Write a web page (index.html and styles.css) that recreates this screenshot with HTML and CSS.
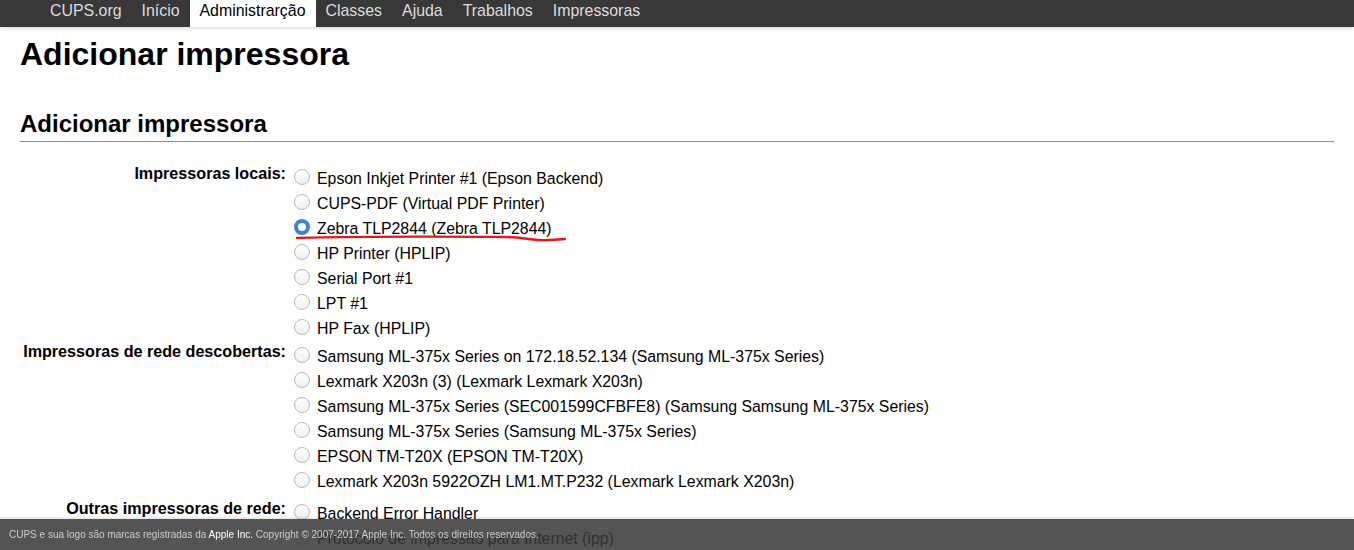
FILE: index.html
```html
<!DOCTYPE html>
<html lang="pt">
<head>
<meta charset="utf-8">
<title>Adicionar impressora - CUPS</title>
<link rel="stylesheet" href="styles.css">
</head>
<body>
<nav class="header">
  <ul class="nav">
    <li><a href="#">CUPS.org</a></li>
    <li><a href="#">Início</a></li>
    <li class="active"><a href="#">Administrarção</a></li>
    <li><a href="#">Classes</a></li>
    <li><a href="#">Ajuda</a></li>
    <li><a href="#">Trabalhos</a></li>
    <li><a href="#">Impressoras</a></li>
  </ul>
</nav>
<main class="body">
  <h1 class="title">Adicionar impressora</h1>
  <h2 class="title2">Adicionar impressora</h2>
  <form class="form">
    <div class="group">
      <div class="label">Impressoras locais:</div>
      <div class="opts">
        <label class="opt"><input type="radio" name="dev"><span>Epson Inkjet Printer #1 (Epson Backend)</span></label>
        <label class="opt"><input type="radio" name="dev"><span>CUPS-PDF (Virtual PDF Printer)</span></label>
        <label class="opt marked"><input type="radio" name="dev" checked><span>Zebra TLP2844 (Zebra TLP2844)</span>
          <svg class="scribble" width="280" height="12" viewBox="0 0 280 12"><path d="M3 5 C 60 3.5, 150 3.5, 212 4 C 230 4.2, 236 7.5, 250 7.2 C 258 7, 265 6.5, 271 6" fill="none" stroke="#e3191b" stroke-width="2.4" stroke-linecap="round"/></svg>
        </label>
        <label class="opt"><input type="radio" name="dev"><span>HP Printer (HPLIP)</span></label>
        <label class="opt"><input type="radio" name="dev"><span>Serial Port #1</span></label>
        <label class="opt"><input type="radio" name="dev"><span>LPT #1</span></label>
        <label class="opt"><input type="radio" name="dev"><span>HP Fax (HPLIP)</span></label>
      </div>
    </div>
    <div class="group">
      <div class="label">Impressoras de rede descobertas:</div>
      <div class="opts">
        <label class="opt"><input type="radio" name="dev"><span>Samsung ML-375x Series on 172.18.52.134 (Samsung ML-375x Series)</span></label>
        <label class="opt"><input type="radio" name="dev"><span>Lexmark X203n (3) (Lexmark Lexmark X203n)</span></label>
        <label class="opt"><input type="radio" name="dev"><span>Samsung ML-375x Series (SEC001599CFBFE8) (Samsung Samsung ML-375x Series)</span></label>
        <label class="opt"><input type="radio" name="dev"><span>Samsung ML-375x Series (Samsung ML-375x Series)</span></label>
        <label class="opt"><input type="radio" name="dev"><span>EPSON TM-T20X (EPSON TM-T20X)</span></label>
        <label class="opt"><input type="radio" name="dev"><span>Lexmark X203n 5922OZH LM1.MT.P232 (Lexmark Lexmark X203n)</span></label>
      </div>
    </div>
    <div class="group group-other">
      <div class="label">Outras impressoras de rede:</div>
      <div class="opts">
        <label class="opt"><input type="radio" name="dev"><span>Backend Error Handler</span></label>
        <label class="opt"><input type="radio" name="dev"><span>Protocolo de impressão para Internet (ipp)</span></label>
        <label class="opt"><input type="radio" name="dev"><span>Protocolo de impressão para Internet (https)</span></label>
      </div>
    </div>
  </form>
</main>
<footer class="footer">CUPS e sua logo são marcas registradas da <a href="#">Apple Inc.</a> Copyright © 2007-2017 Apple Inc. Todos os direitos reservados.</footer>
</body>
</html>
```
FILE: styles.css
```css
html, body {
  margin: 0;
  padding: 0;
  background: #fff;
}
body {
  font-family: "Liberation Sans", Arial, sans-serif;
  font-size: 16px;
  color: #000;
}
.header {
  background: #383838;
  height: 27px;
  box-shadow: 0 2px 3px rgba(0, 0, 0, 0.12);
}
.nav {
  list-style: none;
  margin: 0;
  padding: 0 0 0 40px;
  display: flex;
  height: 27px;
  font-size: 15.9px;
}
.nav li a {
  display: block;
  padding: 0 10px;
  height: 27px;
  line-height: 22px;
  color: #ddd;
  text-decoration: none;
}
.nav li.active a {
  background: #fff;
  color: #000;
}
.body {
  padding: 0 20px 60px;
}
.title {
  font-size: 32px;
  font-weight: bold;
  margin: 0;
  padding-top: 9px;
  line-height: 37px;
}
.title2 {
  font-size: 24px;
  font-weight: bold;
  margin: 0;
  padding-top: 37px;
  line-height: 28px;
  padding-bottom: 3px;
  border-bottom: 1px solid #8f8f8f;
}
.form {
  padding-top: 23px;
}
.group {
  display: flex;
  padding: 1px 0 2px;
}
.group-other {
  padding-top: 5px;
}
.label {
  width: 266px;
  flex: none;
  text-align: right;
  font-weight: bold;
  font-size: 16.15px;
  line-height: 25px;
  margin-top: -5px;
}
.opts {
  display: flex;
  flex-direction: column;
  padding-left: 8px;
  font-size: 15.85px;
}
.opt {
  position: relative;
  display: flex;
  align-items: center;
  height: 25px;
  white-space: nowrap;
}
.opt input {
  appearance: none;
  -webkit-appearance: none;
  width: 16px;
  height: 16px;
  margin: 0 7px 0 0;
  border: 1px solid #b9b9b9;
  border-radius: 50%;
  background: linear-gradient(#fff, #f0f0f0);
  box-sizing: border-box;
  position: relative;
  top: -2px;
}
.opt input:checked {
  border: 4px solid #3d83d6;
  background: #fff;
}
.scribble {
  position: absolute;
  left: 0;
  top: 17px;
  pointer-events: none;
}
.footer {
  position: fixed;
  left: 0;
  right: 0;
  bottom: 0;
  height: 31px;
  line-height: 31px;
  padding-left: 9px;
  background: rgba(56, 56, 56, 0.86);
  color: #cbcbcb;
  font-size: 10px;
  box-shadow: 0 -1px 3px rgba(0, 0, 0, 0.15);
}
.footer a {
  color: #fff;
  text-decoration: none;
}
```
